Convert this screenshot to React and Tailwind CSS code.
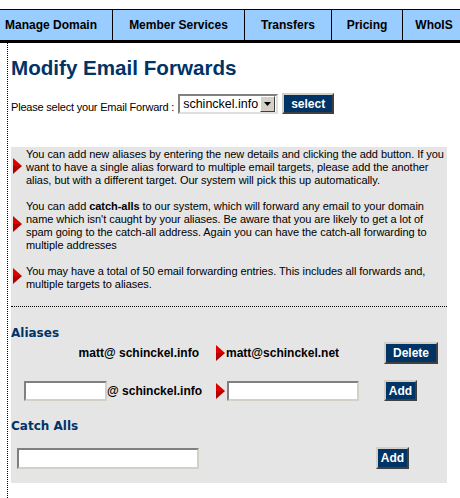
import React from "react";

const Arrow = ({ className = "" }) => (
  <svg width="9" height="16" viewBox="0 0 9 16" className={`shrink-0 ${className}`}>
    <polygon points="0,0 9,8 0,8" fill="#e00000" />
    <polygon points="0,8 9,8 0,16" fill="#b00000" />
  </svg>
);

const Btn = ({ children, className = "" }) => (
  <button
    className={`flex shrink-0 items-center justify-center border-2 border-t-[#d4d0c8] border-l-[#d4d0c8] border-r-[#404040] border-b-[#404040] bg-[#003366] text-[12px] leading-none font-bold text-white ${className}`}
  >
    {children}
  </button>
);

const Field = ({ className = "" }) => (
  <input
    type="text"
    className={`shrink-0 border-2 border-t-[#808080] border-l-[#808080] border-r-[#d4d0c8] border-b-[#d4d0c8] bg-white ${className}`}
  />
);

const navItems = [
  { label: "Manage Domain", cls: "w-[113px] justify-start pl-[5px]" },
  { label: "Member Services", cls: "w-[132px] justify-center" },
  { label: "Transfers", cls: "w-[87px] justify-center" },
  { label: "Pricing", cls: "w-[71px] justify-center" },
  { label: "WhoIS", cls: "w-[63px] justify-center" },
];

const App = () => {
  return (
    <div className="flex h-[498px] w-[460px] flex-col overflow-hidden bg-white font-['Liberation_Sans',Arial,sans-serif] text-black">
      {/* Top navigation */}
      <div className="mt-[9px] flex h-[34px] shrink-0 border-t border-b-[3px] border-black bg-[#99ccff] whitespace-nowrap">
        {navItems.map((item) => (
          <div
            key={item.label}
            className={`flex shrink-0 items-center border-r border-black pb-[1px] text-[12px] font-bold ${item.cls}`}
          >
            {item.label}
          </div>
        ))}
      </div>

      {/* Content */}
      <div className="ml-[7px] flex-1 border-l border-dotted border-black pl-[3px]">
        <h1 className="mt-[13px] text-[20.6px] leading-[24px] font-bold text-[#003366]">
          Modify Email Forwards
        </h1>

        <div className="mt-[13px] flex h-[21px] items-end">
          <span className="text-[11px] leading-[13px] tracking-[-0.2px]">
            Please select your Email Forward :
          </span>
          <div className="ml-[4px] flex h-[20px] w-[100px] items-center border-2 border-t-[#808080] border-l-[#808080] border-r-[#e0e0e0] border-b-[#e0e0e0] bg-white">
            <span className="flex-1 pl-[3px] text-[12.5px] leading-none">schinckel.info</span>
            <span className="mr-[1px] flex h-[16px] w-[15px] items-center justify-center border border-t-white border-l-white border-r-[#404040] border-b-[#404040] bg-[#d4d0c8]">
              <svg width="7" height="4" viewBox="0 0 7 4">
                <polygon points="0,0 7,0 3.5,4" fill="#000" />
              </svg>
            </span>
          </div>
          <Btn className="ml-[4px] h-[21px] w-[52px] self-start">select</Btn>
        </div>

        {/* Grey panel */}
        <div className="mt-[33px] w-[436px] bg-[#e5e5e5] pb-[14px]">
          <div className="border-b border-dotted border-black pt-[1px] pb-[15px] text-[11px] leading-[13px] tracking-[-0.05px] whitespace-nowrap">
            <div className="flex items-center">
              <div className="mb-[4px] w-[15px] shrink-0 pl-[2px]">
                <Arrow />
              </div>
              <p>
                <span className="block">You can add new aliases by entering the new details and clicking the add button. If you</span>
                <span className="block">want to have a single alias forward to multiple email targets, please add the another</span>
                <span className="block">alias, but with a different target. Our system will pick this up automatically.</span>
              </p>
            </div>
            <div className="mt-[13px] flex items-center">
              <div className="mb-[4px] w-[15px] shrink-0 pl-[2px]">
                <Arrow />
              </div>
              <p>
                <span className="block">
                  You can add <b>catch-alls</b> to our system, which will forward any email to your domain
                </span>
                <span className="block">name which isn't caught by your aliases. Be aware that you are likely to get a lot of</span>
                <span className="block">spam going to the catch-all address. Again you can have the catch-all forwarding to</span>
                <span className="block">multiple addresses</span>
              </p>
            </div>
            <div className="mt-[13px] flex items-center">
              <div className="mb-[4px] w-[15px] shrink-0 pl-[2px]">
                <Arrow />
              </div>
              <p>
                <span className="block">You may have a total of 50 email forwarding entries. This includes all forwards and,</span>
                <span className="block">multiple targets to aliases.</span>
              </p>
            </div>
          </div>

          {/* Aliases */}
          <h2 className="mt-[19px] font-['DejaVu_Sans',sans-serif] text-[12px] leading-[14px] font-bold text-[#003366]">
            Aliases
          </h2>
          <div className="mt-[2px] flex h-[22px] items-center text-[12px] leading-[14px] font-bold whitespace-nowrap">
            <div className="w-[188px] shrink-0 text-right">matt@ schinckel.info</div>
            <Arrow className="ml-[17px]" />
            <span className="ml-[1px] w-[158px] shrink-0">matt@schinckel.net</span>
            <Btn className="h-[22px] w-[54px]">Delete</Btn>
          </div>
          <div className="mt-[16px] flex h-[21px] items-center text-[12px] leading-[14px] font-bold whitespace-nowrap">
            <div className="flex w-[188px] shrink-0 items-center pl-[13px]">
              <Field className="h-[20px] w-[83px]" />
              <span>@ schinckel.info</span>
            </div>
            <Arrow className="ml-[17px]" />
            <Field className="ml-[2px] h-[20px] w-[132px]" />
            <Btn className="ml-[25px] h-[21px] w-[33px]">Add</Btn>
          </div>

          {/* Catch Alls */}
          <h2 className="mt-[18px] font-['DejaVu_Sans',sans-serif] text-[12px] leading-[14px] font-bold text-[#003366]">
            Catch Alls
          </h2>
          <div className="mt-[14px] flex h-[22px] items-center">
            <Field className="ml-[6px] h-[21px] w-[182px]" />
            <Btn className="ml-[177px] h-[22px] w-[33px]">Add</Btn>
          </div>
        </div>
      </div>
    </div>
  );
};

export default App;
